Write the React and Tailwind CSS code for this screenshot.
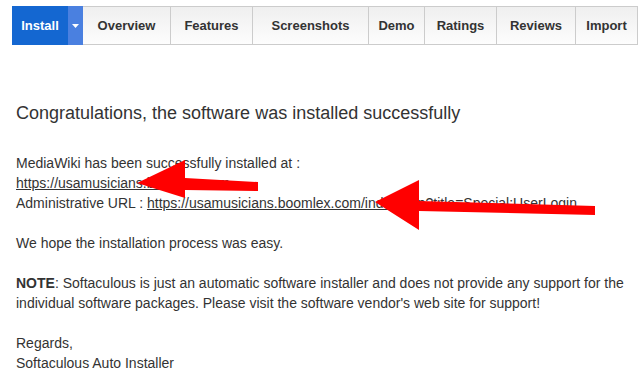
import React from "react";

const tabs = [
  { label: "Overview", w: "w-[87px]" },
  { label: "Features", w: "w-[82px]" },
  { label: "Screenshots", w: "w-[116px]" },
  { label: "Demo", w: "w-[56px]" },
  { label: "Ratings", w: "w-[72px]" },
  { label: "Reviews", w: "w-[79px]" },
  { label: "Import", w: "w-[62px]" },
];

const Arrows = () => (
  <svg className="absolute left-0 top-0 pointer-events-none" width="641" height="376">
    <polygon fill="#ff0000" points="137,183 185,160 185,178 258,182 258,191 185,190 185,198" />
    <polygon fill="#ff0000" points="375,202 419,180 419,201 595,206 595,215 419,211 419,230" />
  </svg>
);

export default function App() {
  return (
    <div className="relative w-[641px] h-[376px] overflow-hidden bg-white font-['Liberation_Sans',Arial,sans-serif] text-[#333]">
      <div className="pl-3 pt-[6px]">
        <div className="flex h-[39px] border border-[#ccc] w-[626px]">
          <div className="flex w-[71px] -my-px -ml-px">
            <div className="w-[56px] bg-[#1467d1] text-white font-bold text-[13px] flex items-center justify-center">
              Install
            </div>
            <div className="w-[15px] bg-[#4a80e0] flex items-center justify-center">
              <svg width="7" height="4" viewBox="0 0 7 4">
                <polygon points="0,0 7,0 3.5,4" fill="#fff" />
              </svg>
            </div>
          </div>
          {tabs.map((t, i) => (
            <div
              key={t.label}
              className={`${t.w} ${i > 0 ? "border-l border-[#ccc]" : ""} bg-gradient-to-b from-[#efefef] to-[#fdfdfd] flex items-center justify-center font-bold text-[13px] text-[#333]`}
            >
              {t.label}
            </div>
          ))}
        </div>
      </div>
      <div className="pl-4 pr-2">
        <h1 className="mt-[56px] text-[18px] leading-[24px] text-[#333]">
          Congratulations, the software was installed successfully
        </h1>
        <div className="mt-[28px] text-[14px] leading-[20px]">
          <p>
            MediaWiki has been successfully installed at :
            <br />
            <a className="underline">https://usamusicians.boomlex.com</a>
            <br />
            Administrative URL :{" "}
            <a className="underline">https://usamusicians.boomlex.com/index.php?title=Special:UserLogin</a>
          </p>
          <p className="mt-5">We hope the installation process was easy.</p>
          <p className="mt-5">
            <b>NOTE</b>: Softaculous is just an automatic software installer and does not provide any support for the
            individual software packages. Please visit the software vendor's web site for support!
          </p>
          <p className="mt-5">
            Regards,
            <br />
            Softaculous Auto Installer
          </p>
        </div>
      </div>
      <Arrows />
    </div>
  );
}
